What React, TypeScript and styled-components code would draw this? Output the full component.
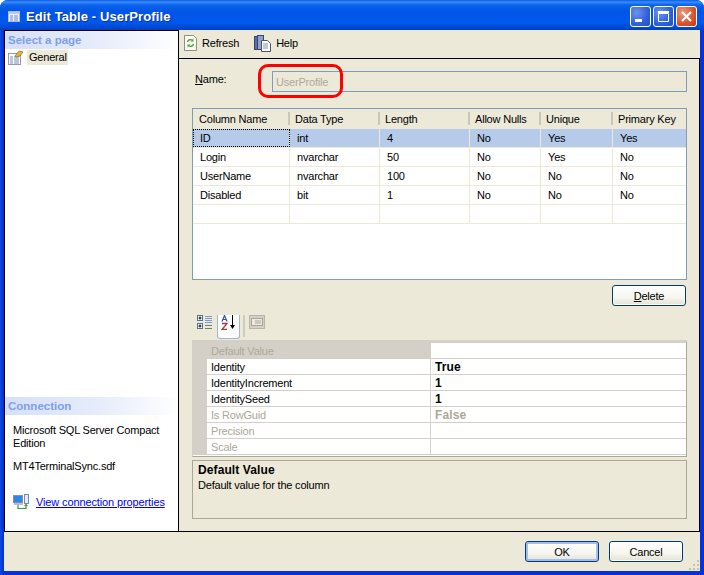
import React from 'react';
import styled, { createGlobalStyle } from 'styled-components';

const UI_FONT = `'Liberation Sans', Arial, sans-serif`;

const Global = createGlobalStyle`
  html, body {
    margin: 0;
    padding: 0;
    background: #ffffff;
  }
  * {
    box-sizing: border-box;
  }
`;

const Window = styled.div`
  width: 704px;
  height: 575px;
  display: flex;
  flex-direction: column;
  background: linear-gradient(90deg, #0a4fdc 0, #0831d9 3px, #0831d9 100%);
  border-radius: 8px 8px 0 0;
  padding: 0 4px 4px;
  overflow: hidden;
  font-family: ${UI_FONT};
  font-size: 11px;
  letter-spacing: -0.2px;
  color: #000;
`;

const TitleBar = styled.div`
  height: 30px;
  margin: 0 -4px;
  padding: 3px 7px 0 8px;
  display: flex;
  align-items: center;
  background: linear-gradient(
    180deg,
    #0a5ae6 0,
    #3a8cf8 2px,
    #0a62ec 5px,
    #0055e5 12px,
    #0058ee 22px,
    #0048d0 28px,
    #0040b8 30px
  );
`;

const TitleText = styled.div`
  flex: 1;
  margin-left: 6px;
  color: #fff;
  font-size: 13px;
  font-weight: bold;
  letter-spacing: 0.1px;
  text-shadow: 1px 1px 0 #0f2f9a;
`;

const CaptionButton = styled.div<{ $close?: boolean }>`
  width: 21px;
  height: 21px;
  margin-left: 2px;
  display: flex;
  align-items: center;
  justify-content: center;
  border: 1px solid #fff;
  border-radius: 3px;
  background: ${(p) =>
    p.$close
      ? 'radial-gradient(circle at 30% 30%, #ec9b80, #d8522c 60%, #c23c18)'
      : 'radial-gradient(circle at 30% 30%, #6d94ea, #2f5fdb 60%, #2450c8)'};
`;

const Client = styled.div`
  flex: 1;
  display: flex;
  flex-direction: column;
  background: #ece9d8;
  min-height: 0;
`;

const Split = styled.div`
  height: 502px;
  display: flex;
  border-bottom: 1px solid #000;
`;

const Sidebar = styled.div`
  width: 175px;
  display: flex;
  flex-direction: column;
  background: #fff;
  border: 1px solid #000;
  border-bottom: none;
`;

const SidebarHeader = styled.div`
  height: 18px;
  padding-left: 3px;
  display: flex;
  align-items: center;
  font-weight: bold;
  font-size: 11.5px;
  letter-spacing: 0;
  color: #7f9fe6;
  background: linear-gradient(90deg, #d6e0f8 0, #e6ecfb 55%, #fff 100%);
`;

const PageItem = styled.div`
  display: flex;
  align-items: center;
  height: 16px;
  padding-left: 3px;
  gap: 3px;
`;

const PageLabel = styled.span`
  background: #ece9d8;
  padding: 1px 1px 2px 2px;
`;

const SidebarSpacer = styled.div`
  flex: 1;
`;

const ConnectionBody = styled.div`
  height: 116px;
  padding: 9px 0 0 8px;
  line-height: 13px;
`;

const ConnLine = styled.div`
  margin-bottom: 10px;
  width: 155px;
`;

const ConnLink = styled.div`
  display: flex;
  align-items: center;
  gap: 7px;
  margin-top: 21px;
  color: #0000ff;
  letter-spacing: -0.12px;
  text-decoration: underline;
`;

const Main = styled.div`
  flex: 1;
  display: flex;
  flex-direction: column;
`;

const Toolbar = styled.div`
  height: 28px;
  display: flex;
  align-items: center;
  padding: 0 0 2px 5px;
`;

const ToolItem = styled.div`
  display: flex;
  align-items: center;
  gap: 5px;
  margin-right: 15px;
`;

const Panel = styled.div`
  flex: 1;
  position: relative;
  display: flex;
  flex-direction: column;
  padding: 12px 12px 0 13px;
  border-top: 1px solid #000;
  border-right: 1px solid #000;
  border-left: 1px solid #000;
  margin-left: -1px;
`;

const NameRow = styled.div`
  display: flex;
  align-items: center;
  height: 21px;
  padding-left: 3px;
`;

const NameLabel = styled.div`
  width: 77px;
  padding-bottom: 6px;
`;

const NameInput = styled.div`
  flex: 1;
  height: 21px;
  display: flex;
  align-items: center;
  padding-left: 3px;
  border: 1px solid #7f9db9;
  color: #aca899;
`;

const Highlight = styled.div`
  position: absolute;
  left: 79px;
  top: 5px;
  width: 85px;
  height: 34px;
  border: 3px solid #ff0000;
  border-radius: 10px;
`;

const Columns = styled.div`
  height: 172px;
  margin-top: 16px;
  background: #fff;
  border: 1px solid #7f9db9;
`;

const GRID = '97px 90px 90px 71px 72px 1fr';

const ColumnsHead = styled.div`
  height: 20px;
  padding-bottom: 1px;
  display: grid;
  grid-template-columns: ${GRID};
  background: #ece9d8;
`;

const HeadCell = styled.div`
  display: flex;
  align-items: center;
  padding-left: 5px;
  background: linear-gradient(#cbc7b8, #cbc7b8) right center / 2px 13px no-repeat;
  &:first-child {
    padding-left: 6px;
  }
  &:last-child {
    background: none;
  }
`;

const ColumnsRow = styled.div<{ $selected?: boolean }>`
  height: 19px;
  display: grid;
  grid-template-columns: ${GRID};
  background: ${(p) => (p.$selected ? '#b6cbea' : '#fff')};
  border-bottom: 1px solid #ece9d8;
`;

const Cell = styled.div<{ $focus?: boolean }>`
  display: flex;
  align-items: center;
  padding-left: 7px;
  border-right: 1px solid #ece9d8;
  outline: ${(p) => (p.$focus ? '1px dotted #000' : 'none')};
  outline-offset: -1px;
  &:last-child {
    border-right: none;
  }
`;

const ActionRow = styled.div`
  display: flex;
  justify-content: flex-end;
  margin-top: 5px;
  padding-right: 1px;
`;

const XpButton = styled.div<{ $default?: boolean }>`
  width: 74px;
  height: 21px;
  display: flex;
  align-items: center;
  justify-content: center;
  border: 1px solid #003c74;
  border-radius: 3px;
  background: linear-gradient(180deg, #fff 0, #f6f5ef 60%, #e4e2d6 100%);
  box-shadow: ${(p) =>
    p.$default ? 'inset 0 0 0 2px #a4bdec' : 'inset 0 0 0 1px #fcfcf8'};
`;

const Underline = styled.span`
  text-decoration: underline;
`;

const GridTools = styled.div`
  height: 24px;
  margin-top: 9px;
  display: flex;
  align-items: flex-start;
  padding-left: 5px;
`;

const ToolSlot = styled.div`
  width: 20px;
  height: 16px;
  display: flex;
`;

const ActiveTool = styled.div`
  width: 23px;
  height: 24px;
  display: flex;
  justify-content: center;
  background: #fff;
  border: 1px solid #9fb6d8;
  border-top: none;
  border-radius: 0 0 3px 3px;
`;

const ToolDivider = styled.div`
  width: 2px;
  height: 22px;
  margin: 0 4px 0 3px;
  background: #d0ccbd;
`;

const PropGrid = styled.div`
  height: 117px;
  margin-top: 1px;
  background: #fff;
  border-style: solid;
  border-width: 3px 1px 1px;
  border-color: #d4d0c8 #aca899 #aca899 #d4d0c8;
`;

const PropRow = styled.div`
  height: 16px;
  display: grid;
  grid-template-columns: 14px 224px 1fr;
`;

const Gutter = styled.div`
  background: #d4d0c8;
`;

const PropName = styled.div<{ $selected?: boolean; $disabled?: boolean }>`
  display: flex;
  align-items: center;
  padding-left: 4px;
  color: ${(p) => (p.$disabled ? '#aca899' : '#000')};
  background: ${(p) => (p.$selected ? '#d4d0c8' : '#fff')};
  border-bottom: 1px solid #d4d0c8;
  border-right: 1px solid #d4d0c8;
`;

const PropValue = styled.div<{ $disabled?: boolean }>`
  display: flex;
  align-items: center;
  padding-left: 4px;
  font-size: 12px;
  font-weight: bold;
  letter-spacing: 0.1px;
  color: ${(p) => (p.$disabled ? '#aca899' : '#000')};
  border-bottom: 1px solid #d4d0c8;
`;

const Description = styled.div`
  height: 59px;
  margin-top: 3px;
  padding: 2px 5px;
  border: 1px solid #aca899;
  line-height: 15px;
`;

const DescTitle = styled.div`
  font-size: 12px;
  font-weight: bold;
  letter-spacing: 0.1px;
`;

const Footer = styled.div`
  flex: 1;
  position: relative;
  display: flex;
  justify-content: flex-end;
  gap: 10px;
  padding: 9px 17px 0 0;
`;

const Grip = styled.svg`
  position: absolute;
  right: 0;
  bottom: 0;
`;

const TableIcon = () => (
  <svg width="12" height="11" viewBox="0 0 12 11">
    <rect x="0.5" y="0.5" width="11" height="10" fill="#eef2fc" stroke="#a9bbe6" />
    <rect x="1" y="1" width="10" height="2" fill="#b9c9f0" />
    <path d="M2 5h3M6 5h4M2 7h3M6 7h4M2 9h3M6 9h4" stroke="#6f86c4" />
  </svg>
);

const MinimizeGlyph = () => (
  <svg width="13" height="13" viewBox="0 0 13 13">
    <rect x="1" y="9" width="7" height="3" fill="#fff" />
  </svg>
);

const MaximizeGlyph = () => (
  <svg width="13" height="13" viewBox="0 0 13 13">
    <path d="M1.5 3.5h10v8h-10z" fill="none" stroke="#fff" />
    <rect x="1" y="1" width="11" height="2" fill="#fff" />
  </svg>
);

const CloseGlyph = () => (
  <svg width="13" height="13" viewBox="0 0 13 13">
    <path d="M2 2l9 9M11 2l-9 9" stroke="#fff" strokeWidth="2.2" />
  </svg>
);

const GeneralIcon = () => (
  <svg width="16" height="15" viewBox="0 0 16 15">
    <rect x="0.5" y="3.5" width="12" height="11" fill="#fff" stroke="#8f9cb8" />
    <path d="M2 7h3M6 7h5M2 9h3M6 9h5M2 11h3M6 11h5M2 13h3M6 13h5" stroke="#7b89b8" />
    <path d="M7 6l4-5 4 1-3 4-4 1z" fill="#e8b52e" stroke="#8a6a14" strokeWidth="0.7" />
  </svg>
);

const RefreshIcon = () => (
  <svg width="13" height="16" viewBox="0 0 13 16">
    <path d="M0.5 0.5h9l3 3v12h-12z" fill="#fdfdf6" stroke="#8a9180" />
    <path d="M3.5 7a3 3 0 0 1 5-1.5M9.5 9a3 3 0 0 1-5 1.5" fill="none" stroke="#46a83c" strokeWidth="1.4" />
    <path d="M9.5 3.5v3h-3zM3.5 12.5v-3h3z" fill="#46a83c" />
  </svg>
);

const HelpIcon = () => (
  <svg width="17" height="17" viewBox="0 0 17 17">
    <rect x="0.5" y="1.5" width="7" height="13" fill="#5b6ea8" stroke="#39466f" />
    <rect x="3.5" y="0.5" width="6" height="14" fill="#8fa0cc" stroke="#39466f" />
    <path d="M7.5 5.5h6l3 3v8h-9z" fill="#fff" stroke="#4a5470" />
    <path d="M9 9h5M9 11h5M9 13h5" stroke="#8390b0" />
  </svg>
);

const CategorizedIcon = () => (
  <svg width="16" height="15" viewBox="0 0 16 15">
    <rect x="0.5" y="0.5" width="5" height="5" fill="#fff" stroke="#54719e" />
    <path d="M1.5 3h3M3 1.5v3" stroke="#000" />
    <rect x="0.5" y="8.5" width="5" height="5" fill="#fff" stroke="#54719e" />
    <path d="M1.5 11h3M3 9.5v3" stroke="#000" />
    <path d="M8 1.5h7M8 3.5h7M8 5.5h7M8 7.5h7" stroke="#7f9ad0" />
    <path d="M8 10.5h7M8 13.5h7" stroke="#6f7f80" />
  </svg>
);

const AlphaIcon = () => (
  <svg width="16" height="15" viewBox="0 0 16 15">
    <path d="M1 6.5l2.5-6 2.5 6M2 4.5h3" fill="none" stroke="#2f55b8" strokeWidth="1.2" />
    <path d="M1 8.5h5l-5 6h5" fill="none" stroke="#a83a3a" strokeWidth="1.3" />
    <path d="M11.5 0v12" stroke="#000" />
    <path d="M9 10h5l-2.5 4z" fill="#000" />
  </svg>
);

const PagesIcon = () => (
  <svg width="16" height="14" viewBox="0 0 16 14">
    <rect x="0.5" y="0.5" width="15" height="13" fill="#d4d0c8" stroke="#b8b5aa" />
    <rect x="2.5" y="3.5" width="11" height="7" fill="#ece9e0" stroke="#a8a59a" />
    <path d="M6 6h6M6 8h6" stroke="#a8a59a" />
  </svg>
);

const ConnectionIcon = () => (
  <svg width="16" height="16" viewBox="0 0 16 16">
    <rect x="0.5" y="1.5" width="9" height="7" fill="#2f86e8" stroke="#7f8fb0" />
    <rect x="1" y="9" width="9" height="2" fill="#b8bccb" />
    <rect x="11.5" y="0.5" width="4" height="9" fill="#e6e9f2" stroke="#7f8aa6" />
    <path d="M5 11v3.5h8V11" fill="none" stroke="#3f9a3a" strokeWidth="1.2" />
    <path d="M11 12l2-2.5 2 2.5z" fill="#3f9a3a" />
  </svg>
);

const columns = ['Column Name', 'Data Type', 'Length', 'Allow Nulls', 'Unique', 'Primary Key'];

const rows = [
  ['ID', 'int', '4', 'No', 'Yes', 'Yes'],
  ['Login', 'nvarchar', '50', 'No', 'Yes', 'No'],
  ['UserName', 'nvarchar', '100', 'No', 'No', 'No'],
  ['Disabled', 'bit', '1', 'No', 'No', 'No'],
  ['', '', '', '', '', ''],
];

const props = [
  { name: 'Default Value', value: '', selected: true, disabled: true },
  { name: 'Identity', value: 'True' },
  { name: 'IdentityIncrement', value: '1' },
  { name: 'IdentitySeed', value: '1' },
  { name: 'Is RowGuid', value: 'False', disabled: true },
  { name: 'Precision', value: '', disabled: true },
  { name: 'Scale', value: '', disabled: true },
];

const App = () => {
  return (
    <Window>
      <Global />
      <TitleBar>
        <TableIcon />
        <TitleText>Edit Table - UserProfile</TitleText>
        <CaptionButton>
          <MinimizeGlyph />
        </CaptionButton>
        <CaptionButton>
          <MaximizeGlyph />
        </CaptionButton>
        <CaptionButton $close>
          <CloseGlyph />
        </CaptionButton>
      </TitleBar>
      <Client>
        <Split>
          <Sidebar>
            <SidebarHeader>Select a page</SidebarHeader>
            <PageItem>
              <GeneralIcon />
              <PageLabel>General</PageLabel>
            </PageItem>
            <SidebarSpacer />
            <SidebarHeader>Connection</SidebarHeader>
            <ConnectionBody>
              <ConnLine>Microsoft SQL Server Compact Edition</ConnLine>
              <ConnLine>MT4TerminalSync.sdf</ConnLine>
              <ConnLink>
                <ConnectionIcon />
                View connection properties
              </ConnLink>
            </ConnectionBody>
          </Sidebar>
          <Main>
            <Toolbar>
              <ToolItem>
                <RefreshIcon />
                Refresh
              </ToolItem>
              <ToolItem>
                <HelpIcon />
                Help
              </ToolItem>
            </Toolbar>
            <Panel>
              <NameRow>
                <NameLabel>
                  <Underline>N</Underline>ame:
                </NameLabel>
                <NameInput>UserProfile</NameInput>
              </NameRow>
              <Highlight />
              <Columns>
                <ColumnsHead>
                  {columns.map((c) => (
                    <HeadCell key={c}>{c}</HeadCell>
                  ))}
                </ColumnsHead>
                {rows.map((row, i) => (
                  <ColumnsRow key={i} $selected={i === 0}>
                    {row.map((v, j) => (
                      <Cell key={j} $focus={i === 0 && j === 0}>
                        {v}
                      </Cell>
                    ))}
                  </ColumnsRow>
                ))}
              </Columns>
              <ActionRow>
                <XpButton>
                  <span>
                    <Underline>D</Underline>elete
                  </span>
                </XpButton>
              </ActionRow>
              <GridTools>
                <ToolSlot>
                  <CategorizedIcon />
                </ToolSlot>
                <ActiveTool>
                  <AlphaIcon />
                </ActiveTool>
                <ToolDivider />
                <ToolSlot>
                  <PagesIcon />
                </ToolSlot>
              </GridTools>
              <PropGrid>
                {props.map((p) => (
                  <PropRow key={p.name}>
                    <Gutter />
                    <PropName $selected={p.selected} $disabled={p.disabled}>
                      {p.name}
                    </PropName>
                    <PropValue $disabled={p.disabled}>{p.value}</PropValue>
                  </PropRow>
                ))}
              </PropGrid>
              <Description>
                <DescTitle>Default Value</DescTitle>
                Default value for the column
              </Description>
            </Panel>
          </Main>
        </Split>
        <Footer>
          <XpButton $default>OK</XpButton>
          <XpButton>Cancel</XpButton>
          <Grip width="12" height="12" viewBox="0 0 12 12">
            <path d="M9 1h2v2H9zM5 5h2v2H5zM9 5h2v2H9zM1 9h2v2H1zM5 9h2v2H5zM9 9h2v2H9z" fill="#c4c1b2" />
          </Grip>
        </Footer>
      </Client>
    </Window>
  );
};

export default App;
